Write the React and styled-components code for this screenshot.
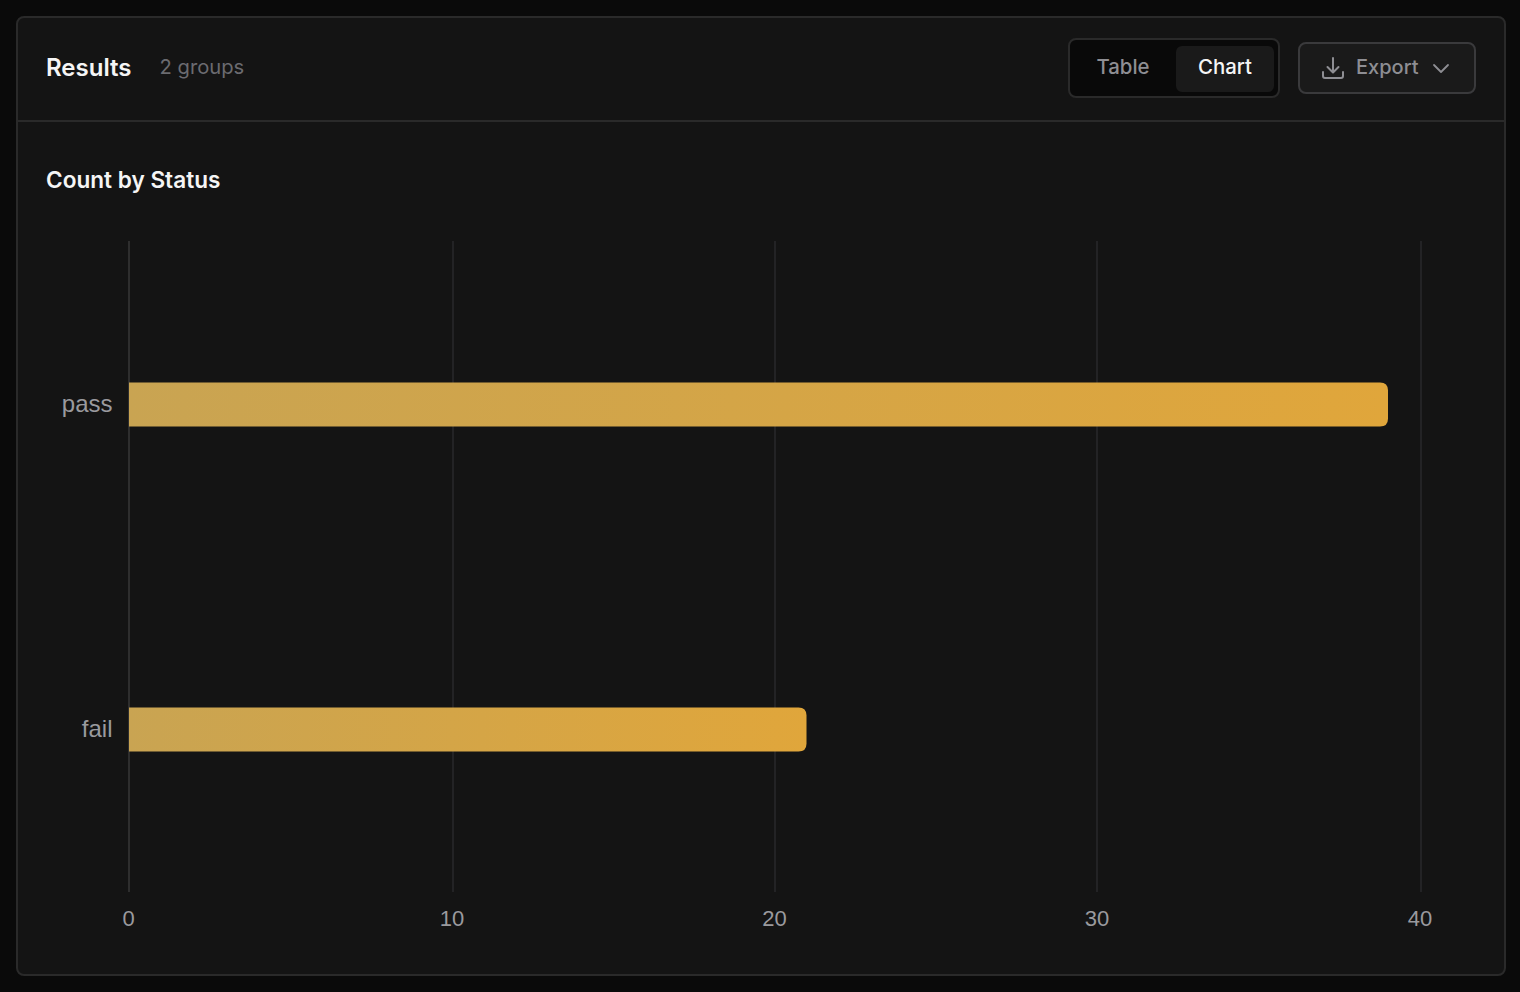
import React from "react";
import styled, { createGlobalStyle } from "styled-components";

const Global = createGlobalStyle`
  html, body { margin: 0; padding: 0; background: #0a0a0a; }
  body { font-family: Inter, "Noto Sans", sans-serif; }
  * { box-sizing: border-box; }
`;

const Page = styled.div`
  width: 1520px;
  height: 992px;
  padding: 16px 14px 16px 16px;
  background: #0a0a0a;
`;

const Panel = styled.section`
  height: 960px;
  background: #141414;
  border: 2px solid #2a2a2a;
  border-radius: 8px;
  display: flex;
  flex-direction: column;
`;

const Header = styled.header`
  height: 104px;
  flex: none;
  padding: 0 28px 2px;
  border-bottom: 2px solid #2a2a2a;
  display: flex;
  align-items: center;
  justify-content: space-between;
`;

const HeaderLeft = styled.div`
  display: flex;
  align-items: center;
  gap: 28px;
`;

const Title = styled.h2`
  margin: 0;
  font-size: 24px;
  font-weight: 600;
  line-height: 32px;
  color: #f5f5f5;
`;

const Count = styled.span`
  font-size: 20.2px;
  line-height: 28px;
  padding-bottom: 2px;
  color: #6b6b70;
`;

const Actions = styled.div`
  display: flex;
  align-items: center;
  gap: 18px;
`;

const Toggle = styled.div`
  height: 60px;
  width: 212px;
  padding: 6px 4px 4px;
  display: flex;
  gap: 4px;
  background: #090909;
  border: 2px solid #2a2a2a;
  border-radius: 8px;
`;

const ToggleItem = styled.button`
  width: 98px;
  border: 0;
  border-radius: 6px;
  padding: 0 0 4px;
  font: 500 20.4px/28px Inter, sans-serif;
  color: ${(p) => (p.$active ? "#f5f5f5" : "#8e8e93")};
  background: ${(p) => (p.$active ? "#1a1a1a" : "transparent")};
`;

const ExportButton = styled.button`
  width: 178px;
  height: 52px;
  padding: 0 0 0 21px;
  display: flex;
  align-items: center;
  gap: 11px;
  background: #1a1a1a;
  border: 2px solid #3a3a3c;
  border-radius: 8px;
  font: 500 20px/28px Inter, sans-serif;
  color: #8e8e93;
`;

const ExportLabel = styled.span`
  padding-bottom: 2px;
`;

const Chevron = styled.svg`
  margin-left: 2px;
`;

const Body = styled.div`
  flex: 1;
  padding: 43px 28px 0;
`;

const ChartTitle = styled.h3`
  margin: 0;
  font-size: 22.6px;
  font-weight: 600;
  line-height: 30px;
  color: #f5f5f5;
`;

const Chart = styled.svg`
  display: block;
  margin-top: 30px;
`;

const AxisText = styled.text`
  font-family: "Liberation Sans", Arial, sans-serif;
  font-size: ${(p) => p.$size}px;
  fill: #9a9a9e;
`;

const originX = 46;
const originY = 225;
const ticks = [
  { v: 0, x: 129, labelX: 128.5 },
  { v: 10, x: 453, labelX: 452 },
  { v: 20, x: 775, labelX: 774.5 },
  { v: 30, x: 1097, labelX: 1097 },
  { v: 40, x: 1421, labelX: 1420 },
];
const bars = [
  { label: "pass", y: 382.5, w: 1259 },
  { label: "fail", y: 707.5, w: 677.5 },
];

const barPath = (x, y, w, h, r) =>
  `M${x} ${y}H${x + w - r}Q${x + w} ${y} ${x + w} ${y + r}V${y + h - r}Q${x + w} ${y + h} ${x + w - r} ${y + h}H${x}Z`;

export default function App() {
  return (
    <Page>
      <Global />
      <Panel>
        <Header>
          <HeaderLeft>
            <Title>Results</Title>
            <Count>2 groups</Count>
          </HeaderLeft>
          <Actions>
            <Toggle>
              <ToggleItem>Table</ToggleItem>
              <ToggleItem $active>Chart</ToggleItem>
            </Toggle>
            <ExportButton>
              <svg width="24" height="24" viewBox="0 0 24 24" fill="none" stroke="#8e8e93" strokeWidth="2" strokeLinecap="round" strokeLinejoin="round">
                <path d="M2 16v4a2 2 0 0 0 2 2h16a2 2 0 0 0 2-2v-4" />
                <path d="M12 2v14" />
                <path d="M6.5 11l5.5 5.5 5.5-5.5" />
              </svg>
              <ExportLabel>Export</ExportLabel>
              <Chevron width="18" height="18" viewBox="0 0 18 18" fill="none" stroke="#8e8e93" strokeWidth="1.8" strokeLinecap="round" strokeLinejoin="round">
                <path d="M2 6l7 7 7-7" />
              </Chevron>
            </ExportButton>
          </Actions>
        </Header>
        <Body>
          <ChartTitle>Count by Status</ChartTitle>
          <Chart width="1432" height="720" viewBox={`${originX} ${originY} 1432 720`}>
            <defs>
              {bars.map((b) => (
                <linearGradient key={b.label} id={`grad-${b.label}`} x1="0" y1="0" x2="1" y2="0">
                  <stop offset="0" stopColor="#c9a452" />
                  <stop offset="1" stopColor="#e0a63b" />
                </linearGradient>
              ))}
            </defs>
            {ticks.map((t) => (
              <line key={t.v} x1={t.x} x2={t.x} y1="241" y2="892" stroke={t.v === 0 ? "#2e2e2e" : "#232325"} strokeWidth="2" />
            ))}
            {bars.map((b) => (
              <g key={b.label}>
                <path d={barPath(129, b.y, b.w, 44, 8)} fill={`url(#grad-${b.label})`} />
                <AxisText $size={24} x="112.5" y={b.y + 29.5} textAnchor="end">{b.label}</AxisText>
              </g>
            ))}
            {ticks.map((t) => (
              <AxisText key={t.v} $size={22} x={t.labelX} y="926" textAnchor="middle">{t.v}</AxisText>
            ))}
          </Chart>
        </Body>
      </Panel>
    </Page>
  );
}
